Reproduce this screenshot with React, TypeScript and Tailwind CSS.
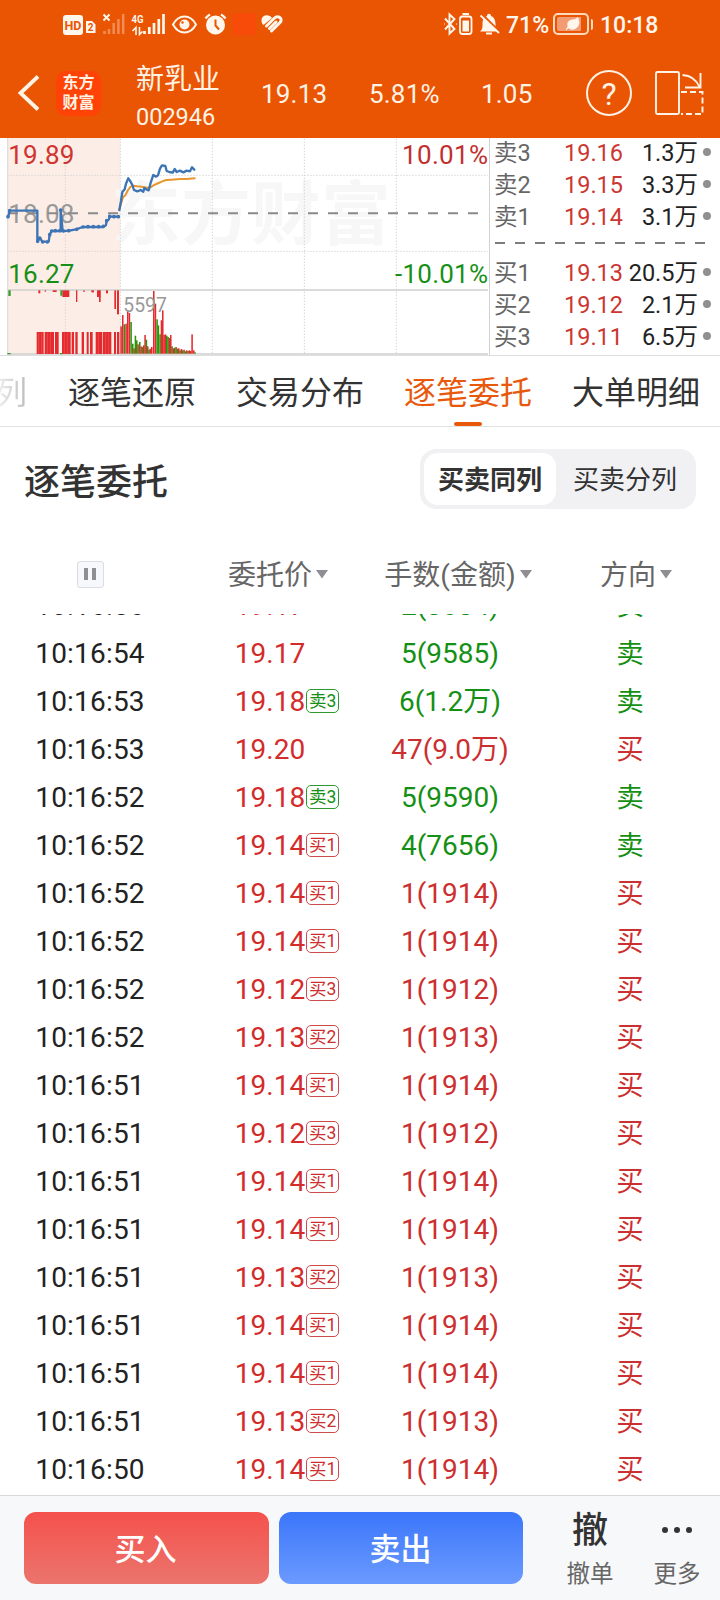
import { Leaf } from 'lucide-react'

type Side = 'buy' | 'sell'

interface Order {
  time: string
  price: string
  tag?: string
  volume: string
  side: Side
}

interface Level {
  label: string
  price: string
  volume: string
}

const ASKS: Level[] = [
  { label: '卖3', price: '19.16', volume: '1.3万' },
  { label: '卖2', price: '19.15', volume: '3.3万' },
  { label: '卖1', price: '19.14', volume: '3.1万' },
]

const BIDS: Level[] = [
  { label: '买1', price: '19.13', volume: '20.5万' },
  { label: '买2', price: '19.12', volume: '2.1万' },
  { label: '买3', price: '19.11', volume: '6.5万' },
]

const ORDERS: Order[] = [
  { time: '10:16:56', price: '19.17', volume: '2(3834)', side: 'sell' },
  { time: '10:16:54', price: '19.17', volume: '5(9585)', side: 'sell' },
  { time: '10:16:53', price: '19.18', tag: '卖3', volume: '6(1.2万)', side: 'sell' },
  { time: '10:16:53', price: '19.20', volume: '47(9.0万)', side: 'buy' },
  { time: '10:16:52', price: '19.18', tag: '卖3', volume: '5(9590)', side: 'sell' },
  { time: '10:16:52', price: '19.14', tag: '买1', volume: '4(7656)', side: 'sell' },
  { time: '10:16:52', price: '19.14', tag: '买1', volume: '1(1914)', side: 'buy' },
  { time: '10:16:52', price: '19.14', tag: '买1', volume: '1(1914)', side: 'buy' },
  { time: '10:16:52', price: '19.12', tag: '买3', volume: '1(1912)', side: 'buy' },
  { time: '10:16:52', price: '19.13', tag: '买2', volume: '1(1913)', side: 'buy' },
  { time: '10:16:51', price: '19.14', tag: '买1', volume: '1(1914)', side: 'buy' },
  { time: '10:16:51', price: '19.12', tag: '买3', volume: '1(1912)', side: 'buy' },
  { time: '10:16:51', price: '19.14', tag: '买1', volume: '1(1914)', side: 'buy' },
  { time: '10:16:51', price: '19.14', tag: '买1', volume: '1(1914)', side: 'buy' },
  { time: '10:16:51', price: '19.13', tag: '买2', volume: '1(1913)', side: 'buy' },
  { time: '10:16:51', price: '19.14', tag: '买1', volume: '1(1914)', side: 'buy' },
  { time: '10:16:51', price: '19.14', tag: '买1', volume: '1(1914)', side: 'buy' },
  { time: '10:16:51', price: '19.13', tag: '买2', volume: '1(1913)', side: 'buy' },
  { time: '10:16:50', price: '19.14', tag: '买1', volume: '1(1914)', side: 'buy' },
]

const RED = '#e32a2e'
const GREEN = '#2a9308'

// call auction: matched volume blocks, [x, width]
const AUCTION_BLOCKS = [
  [110, 21], [134, 28], [165, 11], [186, 26], [215, 7], [226, 7], [245, 7],
  [260, 6], [270, 8], [287, 20], [309, 25], [342, 6], [351, 7],
]

// call auction: unmatched volume hanging from the divider, [x, width, height]
const AUCTION_HANGING = [
  [115, 6, 9], [134, 4, 4], [158, 12, 5], [187, 21, 20], [228, 4, 35], [250, 4, 5],
  [274, 8, 6], [291, 10, 20], [297, 5, 35], [318, 6, 9], [343, 5, 56], [351, 6, 72],
]

// continuous trading: [x, height, up]
const BARS = [
  [361, 82, 1], [366, 116, 1], [371, 88, 0], [376, 90, 1], [381, 130, 1], [386, 122, 1],
  [391, 95, 0], [396, 30, 0], [400, 16, 1], [404, 54, 0], [408, 40, 0], [412, 28, 1],
  [417, 35, 0], [421, 22, 1], [425, 20, 0], [429, 25, 1], [433, 56, 1], [437, 42, 0],
  [441, 22, 1], [445, 12, 0], [449, 15, 1], [453, 20, 1], [459, 188, 1], [464, 150, 1],
  [469, 103, 0], [473, 85, 0], [478, 58, 0], [482, 100, 1], [486, 130, 1], [490, 56, 1],
  [494, 58, 1], [498, 54, 0], [502, 50, 0], [506, 47, 1], [510, 56, 1], [514, 22, 0],
  [518, 16, 1], [522, 18, 0], [526, 20, 1], [530, 15, 0], [534, 16, 1], [538, 10, 0],
  [542, 14, 1], [546, 10, 0], [550, 12, 1], [554, 7, 0], [558, 10, 1], [562, 8, 0],
  [566, 10, 1], [570, 8, 1], [574, 58, 1], [579, 10, 1], [583, 4, 0],
]

function StatusBar() {
  return (
    <div className="flex h-12 items-center pl-[62px] text-[#fff6ec]">
      <svg className="h-6 w-[222px]" viewBox="62 12 222 24" fill="none" stroke="currentColor">
        <rect x="63" y="15" width="20" height="20" rx="3" fill="currentColor" stroke="none" />
        <text x="73" y="29.500" textAnchor="middle" fontSize="12.500" fontWeight="700" fill="#ea5504" stroke="none">HD</text>
        <path d="M86 21h6l3.500 3.500v8.500h-9.500z" fill="currentColor" stroke="none" />
        <text x="90.500" y="31" textAnchor="middle" fontSize="10" fontWeight="700" fill="#ea5504" stroke="none">2</text>
        <path d="M103.500 14.500l6 6M109.500 14.500l-6 6" strokeWidth="2" />
        <path d="M104.500 34v-3M109 34v-5M113.700 34v-11M118.400 34v-15M123.200 34v-20" strokeWidth="2.500" opacity=".35" />
        <text x="131.500" y="22.800" fontSize="11.500" fontWeight="700" textLength="12" lengthAdjust="spacingAndGlyphs" fill="currentColor" stroke="none">4G</text>
        <path d="M136 35v-7.500l-3.500 3.500M139.500 27v7.500l3-3" strokeWidth="1.600" />
        <path d="M144.500 34v-3M149.300 34v-7M154 34v-11M158.800 34v-15M163.500 34v-20" strokeWidth="2.700" />
        <path d="M173 24.500c3-5.500 7-8 11.500-8s8.500 2.500 11.500 8c-3 5.500-7 8-11.500 8s-8.500-2.500-11.500-8z" strokeWidth="2" />
        <circle cx="184.500" cy="24.500" r="5" fill="currentColor" stroke="none" />
        <circle cx="182.500" cy="22.500" r="1.200" fill="#ea5504" stroke="none" />
        <circle cx="215.500" cy="25" r="9.500" fill="currentColor" stroke="none" />
        <path d="M205.500 18.500a13 13 0 0 1 4.500-4M225.500 18.500a13 13 0 0 0-4.500-4" strokeWidth="2.500" />
        <path d="M215.500 19.500v6l3.500 4" stroke="#ea5504" strokeWidth="2" />
        <rect x="232.500" y="13" width="23.500" height="22.500" rx="4" fill="#f84a08" stroke="none" />
        <path d="M272 18c-3-4.500-10.500-3-10.500 2.500 0 2 .5 3 2 4.500z" fill="currentColor" stroke="none" />
        <path d="M266.500 26l7.500-7.500c4-4 9.500 0 6 4l-8.500 8.500M269.500 28.500l6.500-6.500" strokeWidth="3" strokeLinecap="round" />
      </svg>
      <svg className="ml-[158px] h-6 w-[60px]" viewBox="442 12 60 24" fill="none" stroke="currentColor">
        <path d="M445 18.500l9.500 10.500-5 4.500v-19l5 4.500-9.500 10.500M444 24h.5M456 24h.5" strokeWidth="1.900" />
        <rect x="460" y="16.500" width="11.500" height="17.500" rx="2.500" strokeWidth="1.800" />
        <path d="M462.500 14h6.500" strokeWidth="2" />
        <rect x="462.500" y="20.500" width="6.500" height="11" fill="currentColor" stroke="none" />
        <path d="M480 31.500c2.500-2 2.500-4 2.500-7.500 0-5 2-7 4.500-8 0-3 4-3 4 0 3 1 4.500 4 4.500 8 0 3.500 0 5.500 2.500 7.500z" fill="currentColor" stroke="none" />
        <path d="M486 33.500h6" strokeWidth="2" />
        <path d="M482 14.500l18.500 18.500" stroke="#ea5504" strokeWidth="2.500" />
        <path d="M480.500 15.500l18.500 17.500" strokeWidth="1.800" />
      </svg>
      <span className="ml-1 w-[42px] pt-[3px] text-[23px] leading-6 font-medium">71%</span>
      <span className="ml-[5px] flex items-center gap-[2px]">
        <span className="flex h-[22px] w-9 items-center rounded-[5px] border-2 border-[#ffd9bd] p-[2px]">
          <span className="flex h-full w-[24px] items-center justify-end rounded-l-[2px] bg-[#f39b72]">
            <Leaf className="size-4 shrink-0" fill="currentColor" strokeWidth={1} />
          </span>
        </span>
        <span className="h-[11px] w-[2px] rounded-r bg-[#ffd9bd]" />
      </span>
      <span className="ml-[7px] pt-[3px] text-[23px] leading-6 font-medium">10:18</span>
    </div>
  )
}

function AppBar() {
  return (
    <div className="flex h-[90px] items-center pl-[17px] text-[26px] text-[#fff3e6]">
      <svg className="h-9 w-[23px]" viewBox="0 0 23 36" fill="none" stroke="currentColor" strokeWidth="3.800">
        <path d="M21 1.500L3.500 18L21 34.500" />
      </svg>
      <div className="ml-4 flex size-[45px] flex-col items-center justify-center rounded-[10px] bg-[#ff4205] text-[16px] leading-5 font-bold">
        <span>东方</span>
        <span>财富</span>
      </div>
      <div className="ml-[35px] flex w-[125px] flex-col pt-3">
        <span className="text-[28px] leading-9">新乳业</span>
        <span className="text-[23.500px] leading-[38px]">002946</span>
      </div>
      <span className="w-[108px] pt-[3px] tracking-[0.2px]">19.13</span>
      <span className="w-[112px] pt-[3px] tracking-[0.2px]">5.81%</span>
      <span className="w-[105px] pt-[3px] tracking-[0.2px]">1.05</span>
      <span className="flex size-[46px] items-center justify-center rounded-full border-2 border-current pt-[2px] text-[32px]">?</span>
      <svg className="ml-[22px] h-[46px] w-[50px]" viewBox="654 70 50 46" fill="none" stroke="currentColor" strokeWidth="1.900">
        <rect x="656" y="72" width="23" height="42" rx="1.500" />
        <path d="M682.500 75c9 .5 14 5 17 12M700.500 73v14.500h-15.500" />
        <path d="M681 92h21.500v22h-21.500" strokeDasharray="6 3" />
      </svg>
    </div>
  )
}

// drawn on a grid three times finer than its display size
function MinuteChart() {
  return (
    <svg className="h-[217px] w-[489px] shrink-0" viewBox="0 6 1467 651" fill="none">
      <rect x="22" y="6" width="339" height="650" fill="#fdede7" />
      <text x="334" y="308" fontSize="208" fontWeight="700" fill="#f7f7f7" textLength="838">东方财富</text>
      <g stroke="#d3d3d3" strokeWidth="3" strokeDasharray="4 5">
        <path d="M196 8V655M361 8V655M637 8V655M913 8V655M1189 8V655" />
        <path d="M22 118H1464M22 346H1464" />
      </g>
      <path d="M23 6V655" stroke="#dedede" strokeWidth="4" />
      <path d="M22 462H1464M22 654H1464" stroke="#d0d0d0" strokeWidth="5" />
      <g fontSize="78">
        <text x="25" y="84" fill="#d0342f" textLength="198">19.89</text>
        <text x="25" y="441" fill="#178f17" textLength="198">16.27</text>
        <text x="25" y="261" fill="#999" textLength="198">18.08</text>
        <text x="1464" y="84" fill="#c0302f" textAnchor="end" textLength="258">10.01%</text>
        <text x="1464" y="441" fill="#178f17" textAnchor="end" textLength="279">-10.01%</text>
      </g>
      <path d="M24 232H1436" stroke="#8a8a8a" strokeWidth="6" strokeDasharray="30 30" />

      <g fill={RED}>
        {AUCTION_BLOCKS.map(([x, w]) => (
          <rect key={x} x={x} y="588" width={w} height="66" />
        ))}
        {AUCTION_HANGING.map(([x, w, h]) => (
          <rect key={x} x={x} y="463" width={w} height={h} />
        ))}
      </g>
      <path d="M116 590V654M125 590V654M142 590V654M151 590V654M193 590V654M202 590V654M295 590V654M317 590V654M326 590V654" stroke="#f98a86" strokeWidth="1" />
      <path d="M25 463h7v17h-7zM181 463h6v16h-6zM22 651h10v4h-10zM180 651h7v4h-7z" fill="#3d9a2c" />
      {BARS.map(([x, h, up]) => (
        <rect key={x} x={x} y={653 - h} width="4.600" height={h} fill={up ? RED : GREEN} />
      ))}
      <text x="370" y="527" fontSize="58" fill="#999">5597</text>

      <g strokeLinejoin="round" strokeLinecap="round">
        <path
          d="M358 222L364 200L369 184L376 178L384 162L392 152L400 149L412 151L425 152L440 155L452 154L462 147L476 141L487 136L498 132L515 131L540 129L560 129L584 127"
          stroke="#e8972e"
          strokeWidth="6"
        />
        <path
          d="M358 222L363 195L367 168L374 160L378 143L385 127L390 134L397 147L402 162L412 166L422 162L430 167L433 156L440 161L446 163L452 140L460 117L468 122L474 118L480 98L486 88L496 90L500 105L508 108L518 110L524 99L530 108L540 104L550 109L560 104L570 106L576 94L583 101"
          stroke="#3d74b5"
          strokeWidth="7"
        />
        <path
          d="M24 243L30 224H112V316L120 306L127 317H146L149 296L155 285H182V222L188 285L208 284L228 280L248 273H310L318 267L320 254L327 250L329 242H356"
          stroke="#3d74b5"
          strokeWidth="7"
        />
        <path
          d="M24 242v0M29 224v0M113 316v0M119 306v0M128 318v0M142 318v0M149 296v0M155 285v0M166 284v0M182 222v0M180 284v0M190 285v0M206 284v0M230 280v0M249 273v0M264 272v0M280 272v0M296 272v0M310 271v0M320 254v0M329 241v0M342 242v0M355 242v0"
          stroke="#3d74b5"
          strokeWidth="11"
        />
      </g>
    </svg>
  )
}

function LevelRow({ level }: { level: Level }) {
  return (
    <div className="flex h-8 items-center pr-[9px] pl-1 leading-8">
      <span className="w-[70px] text-[#666]">{level.label}</span>
      <span className="w-[62px] text-[#cc3632]">{level.price}</span>
      <span className="-ml-4 flex-1 text-right text-[#222]">{level.volume}</span>
      <span className="mb-[3px] ml-[5px] size-2 rounded-full bg-[#8f8f94]" />
    </div>
  )
}

function OrderBook() {
  return (
    <div className="flex flex-1 flex-col border-l border-[#d2d2d2] text-[23.500px]">
      <div className="-mt-px">
        {ASKS.map((level) => (
          <LevelRow key={level.label} level={level} />
        ))}
      </div>
      <svg className="h-6 w-full" viewBox="0 0 230 24">
        <path d="M5 10H216" stroke="#7d7d7d" strokeWidth="2" strokeDasharray="10 10" />
      </svg>
      {BIDS.map((level) => (
        <LevelRow key={level.label} level={level} />
      ))}
    </div>
  )
}

function Tabs() {
  return (
    <nav className="flex h-[71px] gap-10 overflow-hidden border-b border-[#e2e2e2] text-[32px] leading-[74px] whitespace-nowrap text-[#333]">
      <span className="-ml-[5px] bg-linear-to-r from-[#f4f4f4] to-[#bbb] bg-clip-text pr-px text-transparent">列</span>
      <span>逐笔还原</span>
      <span>交易分布</span>
      <span className="relative h-[70px] text-[#e8590c]">
        逐笔委托
        <span className="absolute bottom-0 left-[50px] h-1 w-7 rounded-full bg-[#e8590c]" />
      </span>
      <span>大单明细</span>
    </nav>
  )
}

function SortLabel({ label }: { label: string }) {
  return (
    <span className="relative block pt-[3px]">
      {label}
      <svg className="absolute top-1/2 left-full ml-1 h-[9px] w-3 -translate-y-[5px]" viewBox="0 0 12 9">
        <path d="M0 0H12L6 8.500z" fill="#8e8e93" />
      </svg>
    </span>
  )
}

function OrderRow({ order }: { order: Order }) {
  const color = order.side === 'buy' ? 'text-[#cc2f2f]' : 'text-[#149014]'
  const tagColor = order.tag?.startsWith('卖')
    ? 'border-[#2c9a2c] text-[#149014]'
    : 'border-[#cc4a4a] text-[#cc2f2f]'

  return (
    <div className="grid h-12 grid-cols-4 text-center leading-[50px]">
      <span className="tracking-[0.2px] text-[#222]">{order.time}</span>
      <span className="text-[#d42b2b]">
        <span className="relative">
          {order.price}
          {order.tag && (
            <span
              className={`absolute top-1/2 left-full ml-px flex h-6 w-[33px] -translate-y-[13px] items-center justify-center rounded-[5px] border pt-[2px] text-[17.500px] leading-none ${tagColor}`}
            >
              {order.tag}
            </span>
          )}
        </span>
      </span>
      <span className={color}>{order.volume}</span>
      <span className={`h-12 text-[27.500px] leading-[50px] ${color}`}>{order.side === 'buy' ? '买' : '卖'}</span>
    </div>
  )
}

function BottomBar() {
  return (
    <footer className="flex h-[105px] border-t border-[#d5d7db] bg-[#f7f8fa] pt-4 pl-6">
      <button className="h-[72px] w-[245px] rounded-xl bg-linear-to-b from-[#f5504b] to-[#ea746d] pt-1 pr-[2px] text-[31px] font-medium text-white">
        买入
      </button>
      <button className="ml-[10px] h-[72px] w-[244px] rounded-xl bg-linear-to-b from-[#3b76fa] to-[#6b9aff] pt-1 pr-px text-[31px] font-medium text-white">
        卖出
      </button>
      <div className="ml-[43px] flex w-12 flex-col items-center">
        <span className="pt-px text-[36px] leading-9 font-medium text-[#333]">撤</span>
        <span className="mt-2 text-[23.500px] leading-[34px] text-[#666]">撤单</span>
      </div>
      <div className="ml-[39px] flex w-12 flex-col items-center">
        <span className="flex h-9 items-center gap-[6px]">
          <span className="size-[6px] rounded-full bg-[#333]" />
          <span className="size-[6px] rounded-full bg-[#333]" />
          <span className="size-[6px] rounded-full bg-[#333]" />
        </span>
        <span className="mt-[9px] text-[23.500px] leading-[34px] text-[#666]">更多</span>
      </div>
    </footer>
  )
}

export default function App() {
  return (
    <div className="flex h-[1600px] w-[720px] flex-col overflow-hidden bg-white font-[Roboto,'Noto_Sans_CJK_SC',sans-serif]">
      <header className="h-[138px] bg-[#ea5504]">
        <StatusBar />
        <AppBar />
      </header>

      <section className="flex h-[218px] border-b border-[#dedede]">
        <MinuteChart />
        <OrderBook />
      </section>

      <Tabs />

      <div className="flex h-[104px] items-center justify-between px-6">
        <h2 className="pt-2 text-[36px] font-medium text-[#333]">逐笔委托</h2>
        <div className="flex h-[60px] w-[276px] rounded-2xl bg-[#f1f1f4] p-1 text-center text-[26px] leading-[55px] text-[#333]">
          <span className="h-[52px] w-[132px] rounded-[14px] bg-white font-bold">买卖同列</span>
          <span className="w-[136px] pl-[2px]">买卖分列</span>
        </div>
      </div>

      <div className="grid h-[83px] grid-cols-4 items-center justify-items-center pt-1 text-[28px] text-[#666]">
        <span className="-mt-px flex size-[27px] items-center justify-center gap-1 rounded-[3px] border border-[#dcdde3] bg-[#f7f8fc]">
          <span className="h-3 w-1 bg-[#8e8e93]" />
          <span className="h-3 w-1 bg-[#8e8e93]" />
        </span>
        <SortLabel label="委托价" />
        <SortLabel label="手数(金额)" />
        <span className="pr-1">
          <SortLabel label="方向" />
        </span>
      </div>

      <main className="flex-1 overflow-hidden text-[28px]">
        <div className="-mt-[33px]">
          {ORDERS.map((order, i) => (
            <OrderRow key={i} order={order} />
          ))}
        </div>
      </main>

      <BottomBar />
    </div>
  )
}
